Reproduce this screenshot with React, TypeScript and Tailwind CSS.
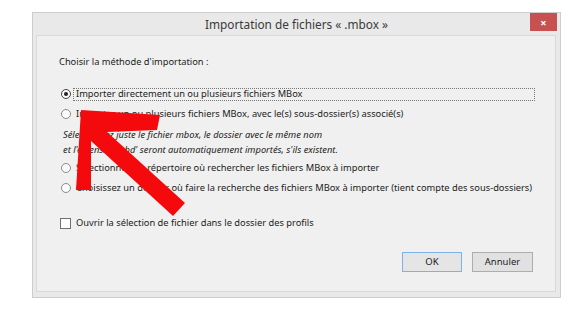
import React from 'react';

function Radio({ checked }: { checked?: boolean }) {
  return (
    <span
      className={`flex items-center justify-center w-[10px] h-[10px] rounded-full border bg-[#fbfbfb] shrink-0 ${
        checked ? 'border-[#444]' : 'border-[#8c8c8c]'
      }`}
    >
      {checked && <span className="w-[4px] h-[4px] rounded-full bg-[#222]" />}
    </span>
  );
}

function Arrow() {
  return (
    <svg className="absolute left-0 top-0 pointer-events-none" width="585" height="318" viewBox="0 0 585 318">
      <polygon
        points="81,110 160,115 157,130 107,132 185,203 173,216 91,141 91,190 76,190"
        fill="#f4090c"
      />
    </svg>
  );
}

export default function App() {
  return (
    <div className="relative w-[585px] h-[318px] bg-white overflow-hidden font-['Noto_Sans','DejaVu_Sans',sans-serif] text-[9.3px] text-[#1b1b1b]">
      <div className="ml-[32px] pt-[12px]">
        <div className="w-[529px] h-[286px] border border-[#cdcdcd] bg-[#e9e9e9] flex flex-col">
          <div className="h-[22px] grid grid-cols-[30px_1fr_30px] items-start">
            <div />
            <div className="h-full pt-[2px] flex items-center justify-center text-[11.8px] text-[#3a3a3a]">
              Importation de fichiers « .mbox »
            </div>
            <div className="flex justify-end pr-[3px]">
              <div className="w-[27px] h-[18px] bg-[#c75050] flex items-center justify-center text-white text-[11px] font-bold leading-none">
                ×
              </div>
            </div>
          </div>
          <div className="flex-1 ml-[3px] mr-[4px] mb-[5px] border border-[#d9d9d9] bg-[#f0f0f0] pl-[22px] pr-[20px] pt-[19px] pb-[19px] flex flex-col">
            <div className="h-[14px] flex items-center">Choisir la méthode d'importation :</div>

            <div className="mt-[15px] h-[20px] flex items-center">
              <span className="ml-[2px]"><Radio checked /></span>
              <span className="ml-[2px] flex-1 h-[13px] flex items-center pl-[2px] border border-dotted border-[#777]">
                Importer directement un ou plusieurs fichiers MBox
              </span>
            </div>
            <div className="h-[20px] flex items-center">
              <span className="ml-[2px]"><Radio /></span>
              <span className="ml-[5px]">Importer un ou plusieurs fichiers MBox, avec le(s) sous-dossier(s) associé(s)</span>
            </div>
            <div className="mt-[3px] h-[15px] flex items-center pl-[4px] italic">
              Sélectionnez juste le fichier mbox, le dossier avec le même nom
            </div>
            <div className="h-[15px] flex items-center pl-[4px] italic">
              et l'extension 'sbd' seront automatiquement importés, s'ils existent.
            </div>
            <div className="mt-[1px] h-[20px] flex items-center">
              <span className="ml-[2px]"><Radio /></span>
              <span className="ml-[5px]">Sélectionnez un répertoire où rechercher les fichiers MBox à importer</span>
            </div>
            <div className="h-[20px] flex items-center">
              <span className="ml-[2px]"><Radio /></span>
              <span className="ml-[5px] whitespace-nowrap">
                Choisissez un dossier où faire la recherche des fichiers MBox à importer (tient compte des sous-dossiers)
              </span>
            </div>

            <div className="mt-[15px] h-[20px] flex items-center">
              <span className="ml-[1px] w-[11px] h-[11px] border border-[#707070] bg-white shrink-0" />
              <span className="ml-[5px]">Ouvrir la sélection de fichier dans le dossier des profils</span>
            </div>

            <div className="flex-1" />
            <div className="flex justify-end gap-[10px] mr-[2px]">
              <button className="w-[60px] h-[20px] border border-[#7db2e6] bg-[#e5e5e5] text-[9.5px] text-[#222]">
                OK
              </button>
              <button className="w-[61px] h-[20px] border border-[#adadad] bg-[#e1e1e1] text-[9.5px] text-[#222]">
                Annuler
              </button>
            </div>
          </div>
        </div>
      </div>
      <Arrow />
    </div>
  );
}
